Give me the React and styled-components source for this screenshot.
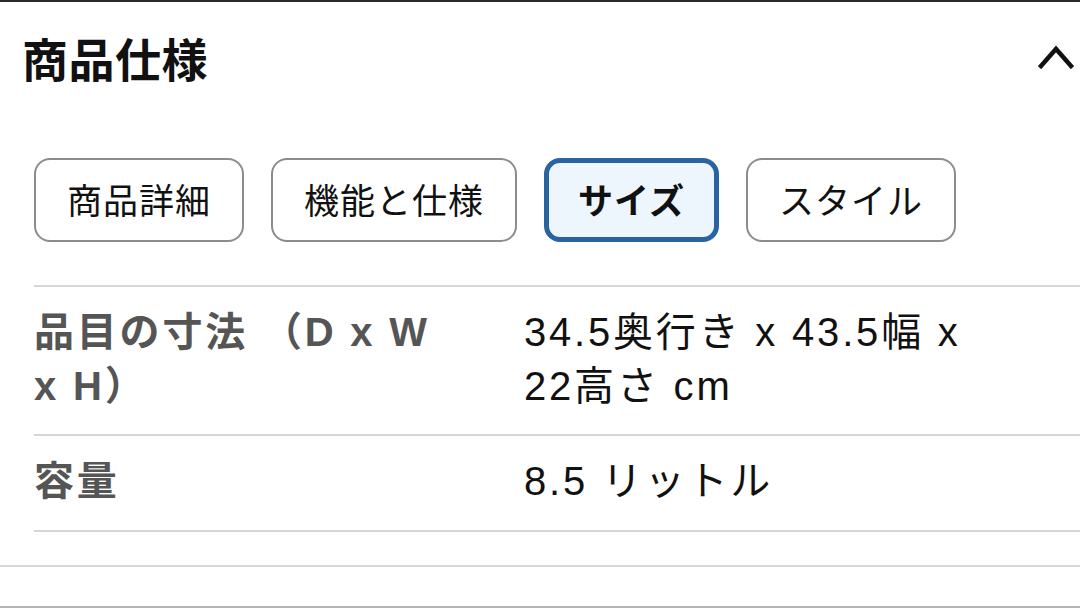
import React from 'react';
import styled, { createGlobalStyle } from 'styled-components';

const GlobalStyle = createGlobalStyle`
  body {
    margin: 0;
    background: #fff;
    font-family: "Liberation Sans", "Noto Sans CJK JP", sans-serif;
  }
`;

const Page = styled.div`
  width: 1080px;
  height: 608px;
  box-sizing: border-box;
  overflow: hidden;
  border-top: 2px solid #2b2b2b;
  border-bottom: 2px solid #b5b5b5;
  display: flex;
  flex-direction: column;
`;

const Header = styled.div`
  display: flex;
  align-items: center;
  justify-content: space-between;
  height: 118px;
  padding: 0 6px 0 22px;
  margin-top: -4px;
`;

const Title = styled.h2`
  margin: 0;
  font-size: 46px;
  font-weight: 700;
  color: #111;
  letter-spacing: 0.5px;
`;

const Chevron = styled.svg`
  width: 36px;
  height: 24px;
  display: block;
`;

const Tabs = styled.div`
  display: flex;
  gap: 27px;
  padding-left: 34px;
  margin-top: 42px;
`;

const Tab = styled.button`
  height: 84px;
  box-sizing: border-box;
  padding: 0 ${p => (p.active ? 29 : 31)}px 4px;
  border-radius: 16px;
  border: ${p => (p.active ? '5px solid #2a64a0' : '2px solid #8c8c8c')};
  background: ${p => (p.active ? '#edf5fd' : '#fff')};
  color: #111;
  font-family: inherit;
  font-size: 35px;
  font-weight: ${p => (p.active ? 700 : 400)};
  letter-spacing: 1px;
`;

const Table = styled.div`
  margin: 43px 0 0 34px;
  border-bottom: 2px solid #d6d6d6;
`;

const Row = styled.div`
  display: grid;
  grid-template-columns: 490px 1fr;
  border-top: 2px solid #d6d6d6;
  padding: 18px 0 ${p => p.bottom}px;
  line-height: 54px;
  font-size: 40px;
  letter-spacing: 2.8px;
`;

const Label = styled.div`
  color: #555;
  font-weight: 700;
  padding-right: 60px;
`;

const Value = styled.div`
  color: #111;
  padding-right: 90px;
`;

const Rule = styled.div`
  height: 2px;
  background: #d6d6d6;
  margin-top: 33px;
`;

const specs = [
  { label: '品目の寸法 （D x W x H）', value: '34.5奥行き x 43.5幅 x 22高さ cm', bottom: 21 },
  { label: '容量', value: '8.5 リットル', bottom: 22 },
];

const tabs = ['商品詳細', '機能と仕様', 'サイズ', 'スタイル'];

export default function App() {
  return (
    <>
      <GlobalStyle />
      <Page>
        <Header>
          <Title>商品仕様</Title>
          <Chevron viewBox="0 0 36 24">
            <path d="M3 21 L18 4 L33 21" fill="none" stroke="#111" strokeWidth="4.5" strokeLinecap="square" />
          </Chevron>
        </Header>
        <Tabs>
          {tabs.map(t => (
            <Tab key={t} active={t === 'サイズ'}>{t}</Tab>
          ))}
        </Tabs>
        <Table>
          {specs.map(s => (
            <Row key={s.label} bottom={s.bottom}>
              <Label>{s.label}</Label>
              <Value>{s.value}</Value>
            </Row>
          ))}
        </Table>
        <Rule />
      </Page>
    </>
  );
}
